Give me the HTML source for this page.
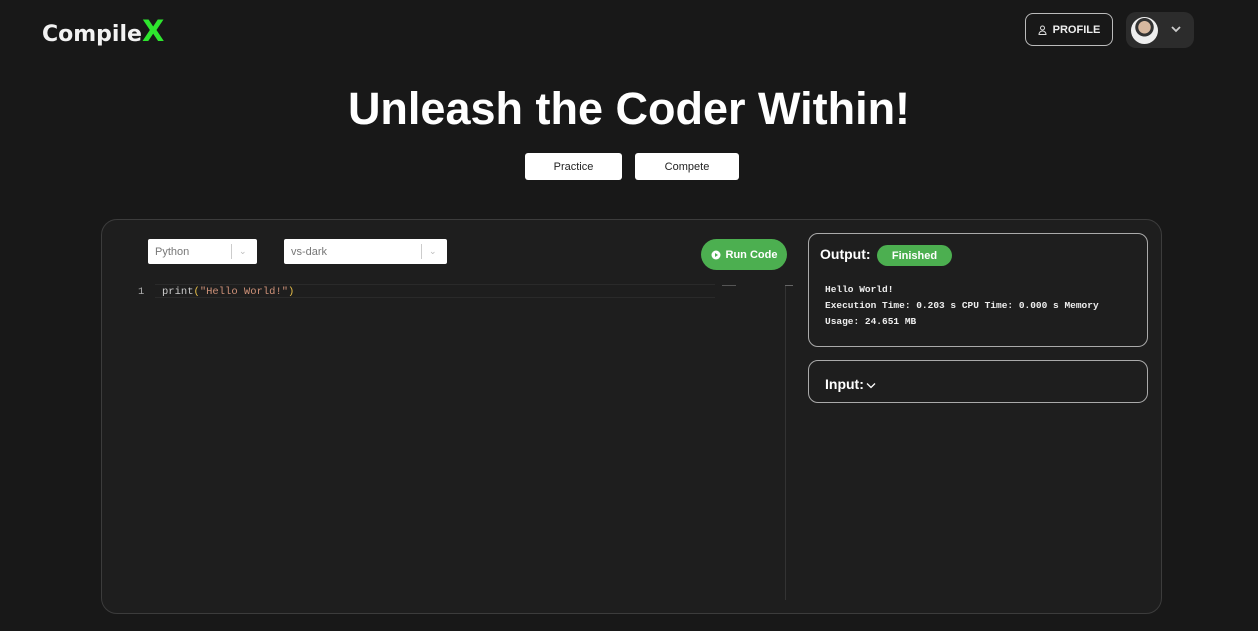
<!DOCTYPE html>
<html><head><style>
*{margin:0;padding:0;box-sizing:border-box}
body{width:1258px;height:631px;background:#181818;font-family:"Liberation Sans",sans-serif;color:#fff;position:relative;overflow:hidden}
.abs{position:absolute}
.logo{left:42px;top:18px;font-family:"DejaVu Sans",sans-serif;font-size:22px;font-weight:bold;color:#f2f2f2;line-height:26px;white-space:nowrap}
.logo span{color:#2ee62e;font-size:29px;line-height:26px}
.prof{left:1025px;top:13px;width:88px;height:33px;border:1.5px solid #bbb;border-radius:8px;font-size:11px;font-weight:bold;display:flex;align-items:center;justify-content:center;gap:6px;color:#eee}
.av{left:1126px;top:12px;width:68px;height:36px;background:#2c2c2c;border-radius:10px}
.face{left:1131px;top:17px;width:27px;height:27px;border-radius:50%;background:radial-gradient(circle at 50% 38%,#d8b9a0 0 28%,#333 30% 42%,#eee 44%)}
h1{position:absolute;left:0;width:1258px;top:83px;text-align:center;font-size:45px;font-weight:bold}
.btn{top:153px;height:27px;background:#fff;color:#222;border-radius:3px;font-size:11px;display:flex;align-items:center;justify-content:center}
.panel{left:101px;top:219px;width:1061px;height:395px;border:1px solid #3c3c3c;border-radius:16px;background:#1e1e1e}
.sel{top:239px;height:25px;background:#fff;border-radius:2px;color:#777;font-size:11px;padding-left:7px;display:flex;align-items:center}
.sel i{position:absolute;top:5px;bottom:5px;width:1px;background:#ccc}
.sel b{position:absolute;color:#bbb;font-size:9px;font-weight:normal}
.run{left:701px;top:239px;width:86px;height:31px;background:#4caf50;border-radius:16px;font-size:11px;font-weight:bold;display:flex;align-items:center;justify-content:center;gap:5px}
.code{top:286px;font-family:"Liberation Mono",monospace;font-size:10.5px;color:#ccc}
.box{left:808px;width:340px;border:1px solid #aaa;border-radius:10px}
.mono{font-family:"Liberation Mono",monospace;font-size:9.5px;font-weight:bold;line-height:16px;color:#eee}
</style></head><body>
<div class="abs logo">Compile<span>X</span></div>
<div class="abs prof"><svg width="9" height="10" viewBox="0 0 9 10" fill="none" stroke="#ddd" stroke-width="1"><circle cx="4.5" cy="3" r="2"/><path d="M1 9.5c0-2 1.5-3.5 3.5-3.5S8 7.5 8 9.5z"/></svg>PROFILE</div>
<div class="abs av"></div>
<div class="abs face"></div>
<svg class="abs" style="left:1170px;top:25px" width="12" height="8" viewBox="0 0 12 8"><path d="M2 2l4 4 4-4" stroke="#ccc" stroke-width="1.8" fill="none"/></svg>
<h1>Unleash the Coder Within!</h1>
<div class="abs btn" style="left:525px;width:97px">Practice</div>
<div class="abs btn" style="left:635px;width:104px">Compete</div>
<div class="abs panel"></div>
<div class="abs sel" style="left:148px;width:109px">Python<i style="left:83px"></i><b style="left:91px">⌄</b></div>
<div class="abs sel" style="left:284px;width:163px">vs-dark<i style="left:137px"></i><b style="left:145px">⌄</b></div>
<div class="abs run"><svg width="10" height="10" viewBox="0 0 10 10"><circle cx="5" cy="5" r="4.5" fill="#fff"/><path d="M4 3l3 2-3 2z" fill="#4caf50"/></svg>Run Code</div>
<div class="abs" style="left:155px;top:284px;width:560px;height:14px;border-top:1px solid #2a2a2a;border-bottom:1px solid #2a2a2a"></div>
<div class="abs code" style="left:138px;color:#aaa">1</div>
<div class="abs code" style="left:162px">print<span style="color:#e8c04a">(</span><span style="color:#ce9178">"Hello World!"</span><span style="color:#e8c04a">)</span></div>
<div class="abs" style="left:722px;top:285px;width:14px;height:1px;background:#555"></div>
<div class="abs" style="left:785px;top:285px;width:1px;height:315px;background:#333"></div>
<div class="abs" style="left:785px;top:285px;width:8px;height:1px;background:#666"></div>
<div class="abs box" style="top:233px;height:114px">
 <div class="abs" style="left:11px;top:12px;font-size:14px;font-weight:bold">Output:</div>
 <div class="abs" style="left:68px;top:11px;width:75px;height:21px;background:#4caf50;border-radius:11px;font-size:11px;font-weight:bold;display:flex;align-items:center;justify-content:center">Finished</div>
 <div class="abs mono" style="left:16px;top:48px;width:320px">Hello World!<br>Execution Time: 0.203 s CPU Time: 0.000 s Memory<br>Usage: 24.651 MB</div>
</div>
<div class="abs box" style="top:360px;height:43px">
 <div class="abs" style="left:16px;top:15px;font-size:14px;font-weight:bold">Input:<svg width="10" height="7" viewBox="0 0 10 7" style="margin-left:2px"><path d="M1 1.5l4 4 4-4" stroke="#fff" stroke-width="1.3" fill="none"/></svg></div>
</div>
</body></html>
